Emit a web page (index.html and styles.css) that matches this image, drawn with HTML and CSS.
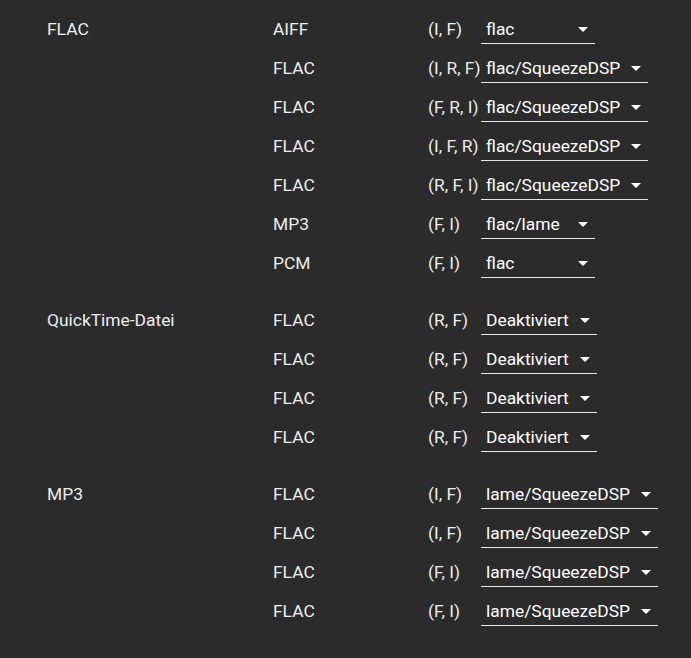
FILE: index.html
```html
<!DOCTYPE html>
<html lang="de">
<head>
  <meta charset="UTF-8">
  <title>Dateitypen</title>
  <link rel="stylesheet" href="styles.css">
</head>
<body>
<div class="filetypes">
  <!-- FLAC -->
  <div class="group">
    <div class="source">FLAC</div>
    <div class="target">AIFF</div><div class="flags">(I, F)</div>
    <div class="pick"><span>flac</span><i class="arrow"></i></div>

    <div class="target">FLAC</div><div class="flags">(I, R, F)</div>
    <div class="pick"><span>flac/SqueezeDSP</span><i class="arrow"></i></div>

    <div class="target">FLAC</div><div class="flags">(F, R, I)</div>
    <div class="pick"><span>flac/SqueezeDSP</span><i class="arrow"></i></div>

    <div class="target">FLAC</div><div class="flags">(I, F, R)</div>
    <div class="pick"><span>flac/SqueezeDSP</span><i class="arrow"></i></div>

    <div class="target">FLAC</div><div class="flags">(R, F, I)</div>
    <div class="pick"><span>flac/SqueezeDSP</span><i class="arrow"></i></div>

    <div class="target">MP3</div><div class="flags">(F, I)</div>
    <div class="pick"><span>flac/lame</span><i class="arrow"></i></div>

    <div class="target">PCM</div><div class="flags">(F, I)</div>
    <div class="pick"><span>flac</span><i class="arrow"></i></div>
  </div>

  <!-- QuickTime -->
  <div class="group">
    <div class="source">QuickTime-Datei</div>
    <div class="target">FLAC</div><div class="flags">(R, F)</div>
    <div class="pick"><span>Deaktiviert</span><i class="arrow"></i></div>

    <div class="target">FLAC</div><div class="flags">(R, F)</div>
    <div class="pick"><span>Deaktiviert</span><i class="arrow"></i></div>

    <div class="target">FLAC</div><div class="flags">(R, F)</div>
    <div class="pick"><span>Deaktiviert</span><i class="arrow"></i></div>

    <div class="target">FLAC</div><div class="flags">(R, F)</div>
    <div class="pick"><span>Deaktiviert</span><i class="arrow"></i></div>
  </div>

  <!-- MP3 -->
  <div class="group">
    <div class="source">MP3</div>
    <div class="target">FLAC</div><div class="flags">(I, F)</div>
    <div class="pick"><span>lame/SqueezeDSP</span><i class="arrow"></i></div>

    <div class="target">FLAC</div><div class="flags">(I, F)</div>
    <div class="pick"><span>lame/SqueezeDSP</span><i class="arrow"></i></div>

    <div class="target">FLAC</div><div class="flags">(F, I)</div>
    <div class="pick"><span>lame/SqueezeDSP</span><i class="arrow"></i></div>

    <div class="target">FLAC</div><div class="flags">(F, I)</div>
    <div class="pick"><span>lame/SqueezeDSP</span><i class="arrow"></i></div>
  </div>
</div>
</body>
</html>
```

FILE: styles.css
```css
body {
  margin: 0;
  background-color: #2b2b2b;
  color: #ededed;
  font-family: Roboto, "Noto Sans", sans-serif;
  font-size: 17.4px;
}
.filetypes {
  padding: 17px 0 0 47px;
}
.group {
  display: grid;
  grid-template-columns: 226px 155px 53px auto;
  grid-auto-rows: 39px;
  margin-bottom: 18px;
}
.source {
  grid-column: 1;
  grid-row: 1;
  line-height: 24px;
}
.target {
  grid-column: 2;
  line-height: 24px;
}
.flags {
  grid-column: 3;
  line-height: 24px;
  white-space: nowrap;
}
.pick {
  grid-column: 4;
  justify-self: start;
  display: flex;
  align-items: center;
  justify-content: space-between;
  min-width: 102px;
  height: 24px;
  padding: 0 7px 2px 5px;
  border-bottom: 1px solid #e6e6e6;
  color: #ffffff;
  line-height: 24px;
}
.arrow {
  width: 0;
  height: 0;
  margin-left: 11px;
  border-left: 5px solid transparent;
  border-right: 5px solid transparent;
  border-top: 5px solid #ffffff;
}
```
